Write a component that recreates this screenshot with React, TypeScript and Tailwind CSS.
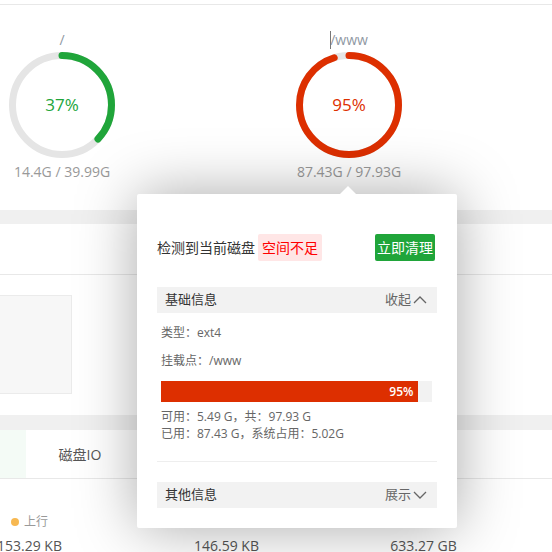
import type { ReactNode } from 'react'

const fontStack = "font-['Open_Sans','Noto_Sans_CJK_SC',sans-serif]"

function Ring({ percent, color }: { percent: number; color: string }) {
  const r = 49.5
  const c = 2 * Math.PI * r
  return (
    <svg width="106" height="106" viewBox="0 0 106 106" className="block">
      <circle cx="53" cy="53" r={r} fill="none" stroke="#e5e5e5" strokeWidth="7" />
      <circle
        cx="53"
        cy="53"
        r={r}
        fill="none"
        stroke={color}
        strokeWidth="7"
        strokeLinecap="round"
        strokeDasharray={`${(c * percent) / 100} ${c}`}
        transform="rotate(-90 53 53)"
      />
    </svg>
  )
}

function DiskItem({ label, percent, color, textClass, usage }: { label: string; percent: number; color: string; textClass: string; usage: string }) {
  return (
    <div className="flex w-[106px] flex-col items-center">
      <p className="text-[14px] leading-[20px] text-[#8f98a3]">{label}</p>
      <div className="relative mt-[2px]">
        <Ring percent={percent} color={color} />
        <span className={`absolute inset-0 flex items-center justify-center text-[17px] ${textClass}`}>{percent}%</span>
      </div>
      <p className="mt-[5px] whitespace-nowrap text-[14px] leading-[18px] text-[#999]">{usage}</p>
    </div>
  )
}

function Chevron({ up }: { up?: boolean }) {
  return (
    <svg width="14" height="8" viewBox="0 0 14 8" className="ml-[2px]">
      <polyline
        points={up ? '1,7 7,1 13,7' : '1,1 7,7 13,1'}
        fill="none"
        stroke="#666"
        strokeWidth="1.3"
      />
    </svg>
  )
}

function SectionHeader({ title, action, up }: { title: string; action: string; up?: boolean }) {
  return (
    <div className="flex h-[26px] items-center justify-between bg-[#f2f2f2] pl-[8px] pr-[10px] text-[13px]">
      <span className="text-[#333]">{title}</span>
      <span className="flex items-center text-[#666]">
        {action}
        <Chevron up={up} />
      </span>
    </div>
  )
}

function Stat({ label, dot, value }: { label: string; dot: string; value: ReactNode }) {
  return (
    <div className="flex w-[197px] flex-col items-center">
      <p className="flex items-center text-[12px] leading-[18px] text-[#999]">
        <span className={`mr-[5px] h-[8px] w-[8px] rounded-full ${dot}`} />
        {label}
      </p>
      <p className="mt-[5px] whitespace-nowrap text-[14px] leading-[20px] text-[#555]">{value}</p>
    </div>
  )
}

export default function App() {
  return (
    <div className={`relative h-[552px] w-[552px] overflow-hidden bg-white ${fontStack}`}>
      <div className="h-[4px]" />
      <section className="flex h-[206px] gap-[181px] border-t border-[#e8e8e8] pl-[9px] pt-[25px]">
        <DiskItem label="/" percent={37} color="#20a53a" textClass="text-[#20a53a]" usage="14.4G / 39.99G" />
        <DiskItem label="/www" percent={95} color="#dd2f00" textClass="text-[#dd2f00]" usage="87.43G / 97.93G" />
      </section>

      <div className="h-[14px] bg-[#f0f0f0]" />
      <div className="h-[51px] border-b border-[#e8e8e8]" />

      <div className="h-[140px] pt-[20px]">
        <div className="-ml-px h-[99px] w-[73px] border border-[#ebebeb] bg-[#f7f7f7]" />
      </div>

      <div className="h-[15px] bg-[#f0f0f0]" />
      <div className="flex h-[49px] border-b border-[#e8e8e8]">
        <div className="w-[26px] bg-[#f4fbf6]" />
        <div className="flex w-[108px] items-center justify-center text-[14px] text-[#555]">磁盘IO</div>
      </div>

      <div className="-ml-[69px] flex pt-[34px]">
        <Stat label="上行" dot="bg-[#f7b851]" value="153.29 KB" />
        <Stat label="下行" dot="bg-[#52a9ff]" value="146.59 KB" />
        <Stat label="总发送" dot="hidden" value="633.27 GB" />
      </div>

      {/* text cursor over the mount label */}
      <span className="absolute left-[330px] top-[31px] h-[18px] w-px bg-[#777]" />

      <div className="absolute left-[137px] top-[194px] h-[334px] w-[320px] rounded-[2px] bg-white px-[20px] pt-[39px] shadow-[0_0_60px_rgba(0,0,0,0.34)]">
        <span className="absolute -top-[8px] left-[203px] h-0 w-0 border-x-[8px] border-b-[8px] border-x-transparent border-b-white" />

        <div className="flex h-[28px] items-center justify-between">
          <div className="flex items-center text-[14px]">
            <span className="text-[#333]">检测到当前磁盘</span>
            <span className="ml-[3px] flex h-[27px] items-center rounded-[2px] bg-[#ffe6e6] px-[4px] text-[#f00]">空间不足</span>
          </div>
          <button className="mr-[2px] flex h-[27px] w-[60px] items-center justify-center rounded-[2px] bg-[#20a53a] text-[14px] text-white">
            立即清理
          </button>
        </div>

        <div className="mt-[26px]">
          <SectionHeader title="基础信息" action="收起" up />
        </div>

        <div className="pl-[4px] pr-[5px] text-[12px] text-[#666]">
          <p className="mt-[11px] leading-[18px]">类型：ext4</p>
          <p className="mt-[10px] leading-[18px]">挂载点：/www</p>
          <div className="mt-[11px] h-[21px] bg-[#f2f2f2]">
            <div className="flex h-full w-[95%] items-center justify-end bg-[#dd2f00] pr-[5px] text-[12px] font-semibold text-white">
              95%
            </div>
          </div>
          <p className="mt-[6px] leading-[17px]">可用：5.49 G，共：97.93 G</p>
          <p className="leading-[17px]">已用：87.43 G，系统占用：5.02G</p>
        </div>

        <div className="mt-[19px] border-t border-[#eee]" />

        <div className="mt-[20px]">
          <SectionHeader title="其他信息" action="展示" />
        </div>
      </div>
    </div>
  )
}
